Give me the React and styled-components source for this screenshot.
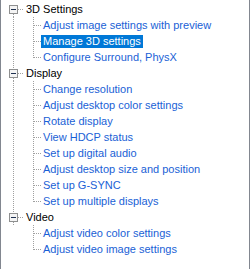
import styled, { createGlobalStyle } from "styled-components";

const GlobalStyle = createGlobalStyle`
  html, body {
    margin: 0;
    padding: 0;
    background: #fff;
  }
  body {
    font-family: "Liberation Sans", Arial, sans-serif;
    font-size: 11px;
  }
`;

const tree = [
  {
    title: "3D Settings",
    items: [
      "Adjust image settings with preview",
      "Manage 3D settings",
      "Configure Surround, PhysX",
    ],
  },
  {
    title: "Display",
    items: [
      "Change resolution",
      "Adjust desktop color settings",
      "Rotate display",
      "View HDCP status",
      "Set up digital audio",
      "Adjust desktop size and position",
      "Set up G-SYNC",
      "Set up multiple displays",
    ],
  },
  {
    title: "Video",
    items: ["Adjust video color settings", "Adjust video image settings"],
  },
];

const selected = "Manage 3D settings";

const LINE = "#a0a0a0";

// one cell of tree guide lines, drawn for a 16px row
const Guide = ({ width, at, up, down, right, box }) => {
  const x = at + 0.5;
  return (
    <GuideSvg width={width} height="16" viewBox={`0 0 ${width} 16`}>
      <g stroke={LINE} strokeDasharray="1 1" shapeRendering="crispEdges">
        {up && <line x1={x} y1="0" x2={x} y2={box ? 4 : 9} />}
        {down && <line x1={x} y1={box ? 13 : 8} x2={x} y2="16" />}
        {right && (
          <line x1={box ? at + 5 : at + 1} y1="8.5" x2={width} y2="8.5" />
        )}
      </g>
      {box && (
        <g shapeRendering="crispEdges">
          <rect
            x={at - 3.5}
            y="4.5"
            width="8"
            height="8"
            fill="#f4f4f4"
            stroke="#8e8f8f"
          />
          <line x1={at - 2} y1="8.5" x2={at + 3} y2="8.5" stroke="#1e3050" />
        </g>
      )}
    </GuideSvg>
  );
};

export default function App() {
  return (
    <>
      <GlobalStyle />
      <Panel>
        {tree.map((group, gi) => {
          const lastGroup = gi === tree.length - 1;
          return (
            <Group key={group.title}>
              <Row>
                <Guide width={23} at={12} up={gi > 0} down box right />
                <Label category>{group.title}</Label>
              </Row>
              {group.items.map((item, ii) => {
                const lastItem = ii === group.items.length - 1;
                return (
                  <Row key={item}>
                    <Guide width={23} at={12} up={!lastGroup} down={!lastGroup} />
                    <Guide width={17} at={9} up down={!lastItem} right />
                    <Label selected={item === selected}>{item}</Label>
                  </Row>
                );
              })}
            </Group>
          );
        })}
      </Panel>
    </>
  );
}

const Panel = styled.div`
  box-sizing: border-box;
  width: 250px;
  height: 269px;
  padding-top: 1px;
  background: #fff;
  border-left: 1px solid #828790;
  border-right: 1px solid #828790;
  overflow: hidden;
`;

const Group = styled.div`
  display: flex;
  flex-direction: column;
`;

const Row = styled.div`
  display: flex;
  align-items: center;
  height: 16px;
`;

const GuideSvg = styled.svg`
  display: block;
  flex: none;
`;

const Label = styled.span`
  padding: 0 2px;
  height: 13px;
  line-height: 13px;
  white-space: nowrap;
  color: ${(p) => (p.selected ? "#fff" : p.category ? "#000" : "#1a5fd6")};
  background: ${(p) => (p.selected ? "#0078d7" : "transparent")};
`;
